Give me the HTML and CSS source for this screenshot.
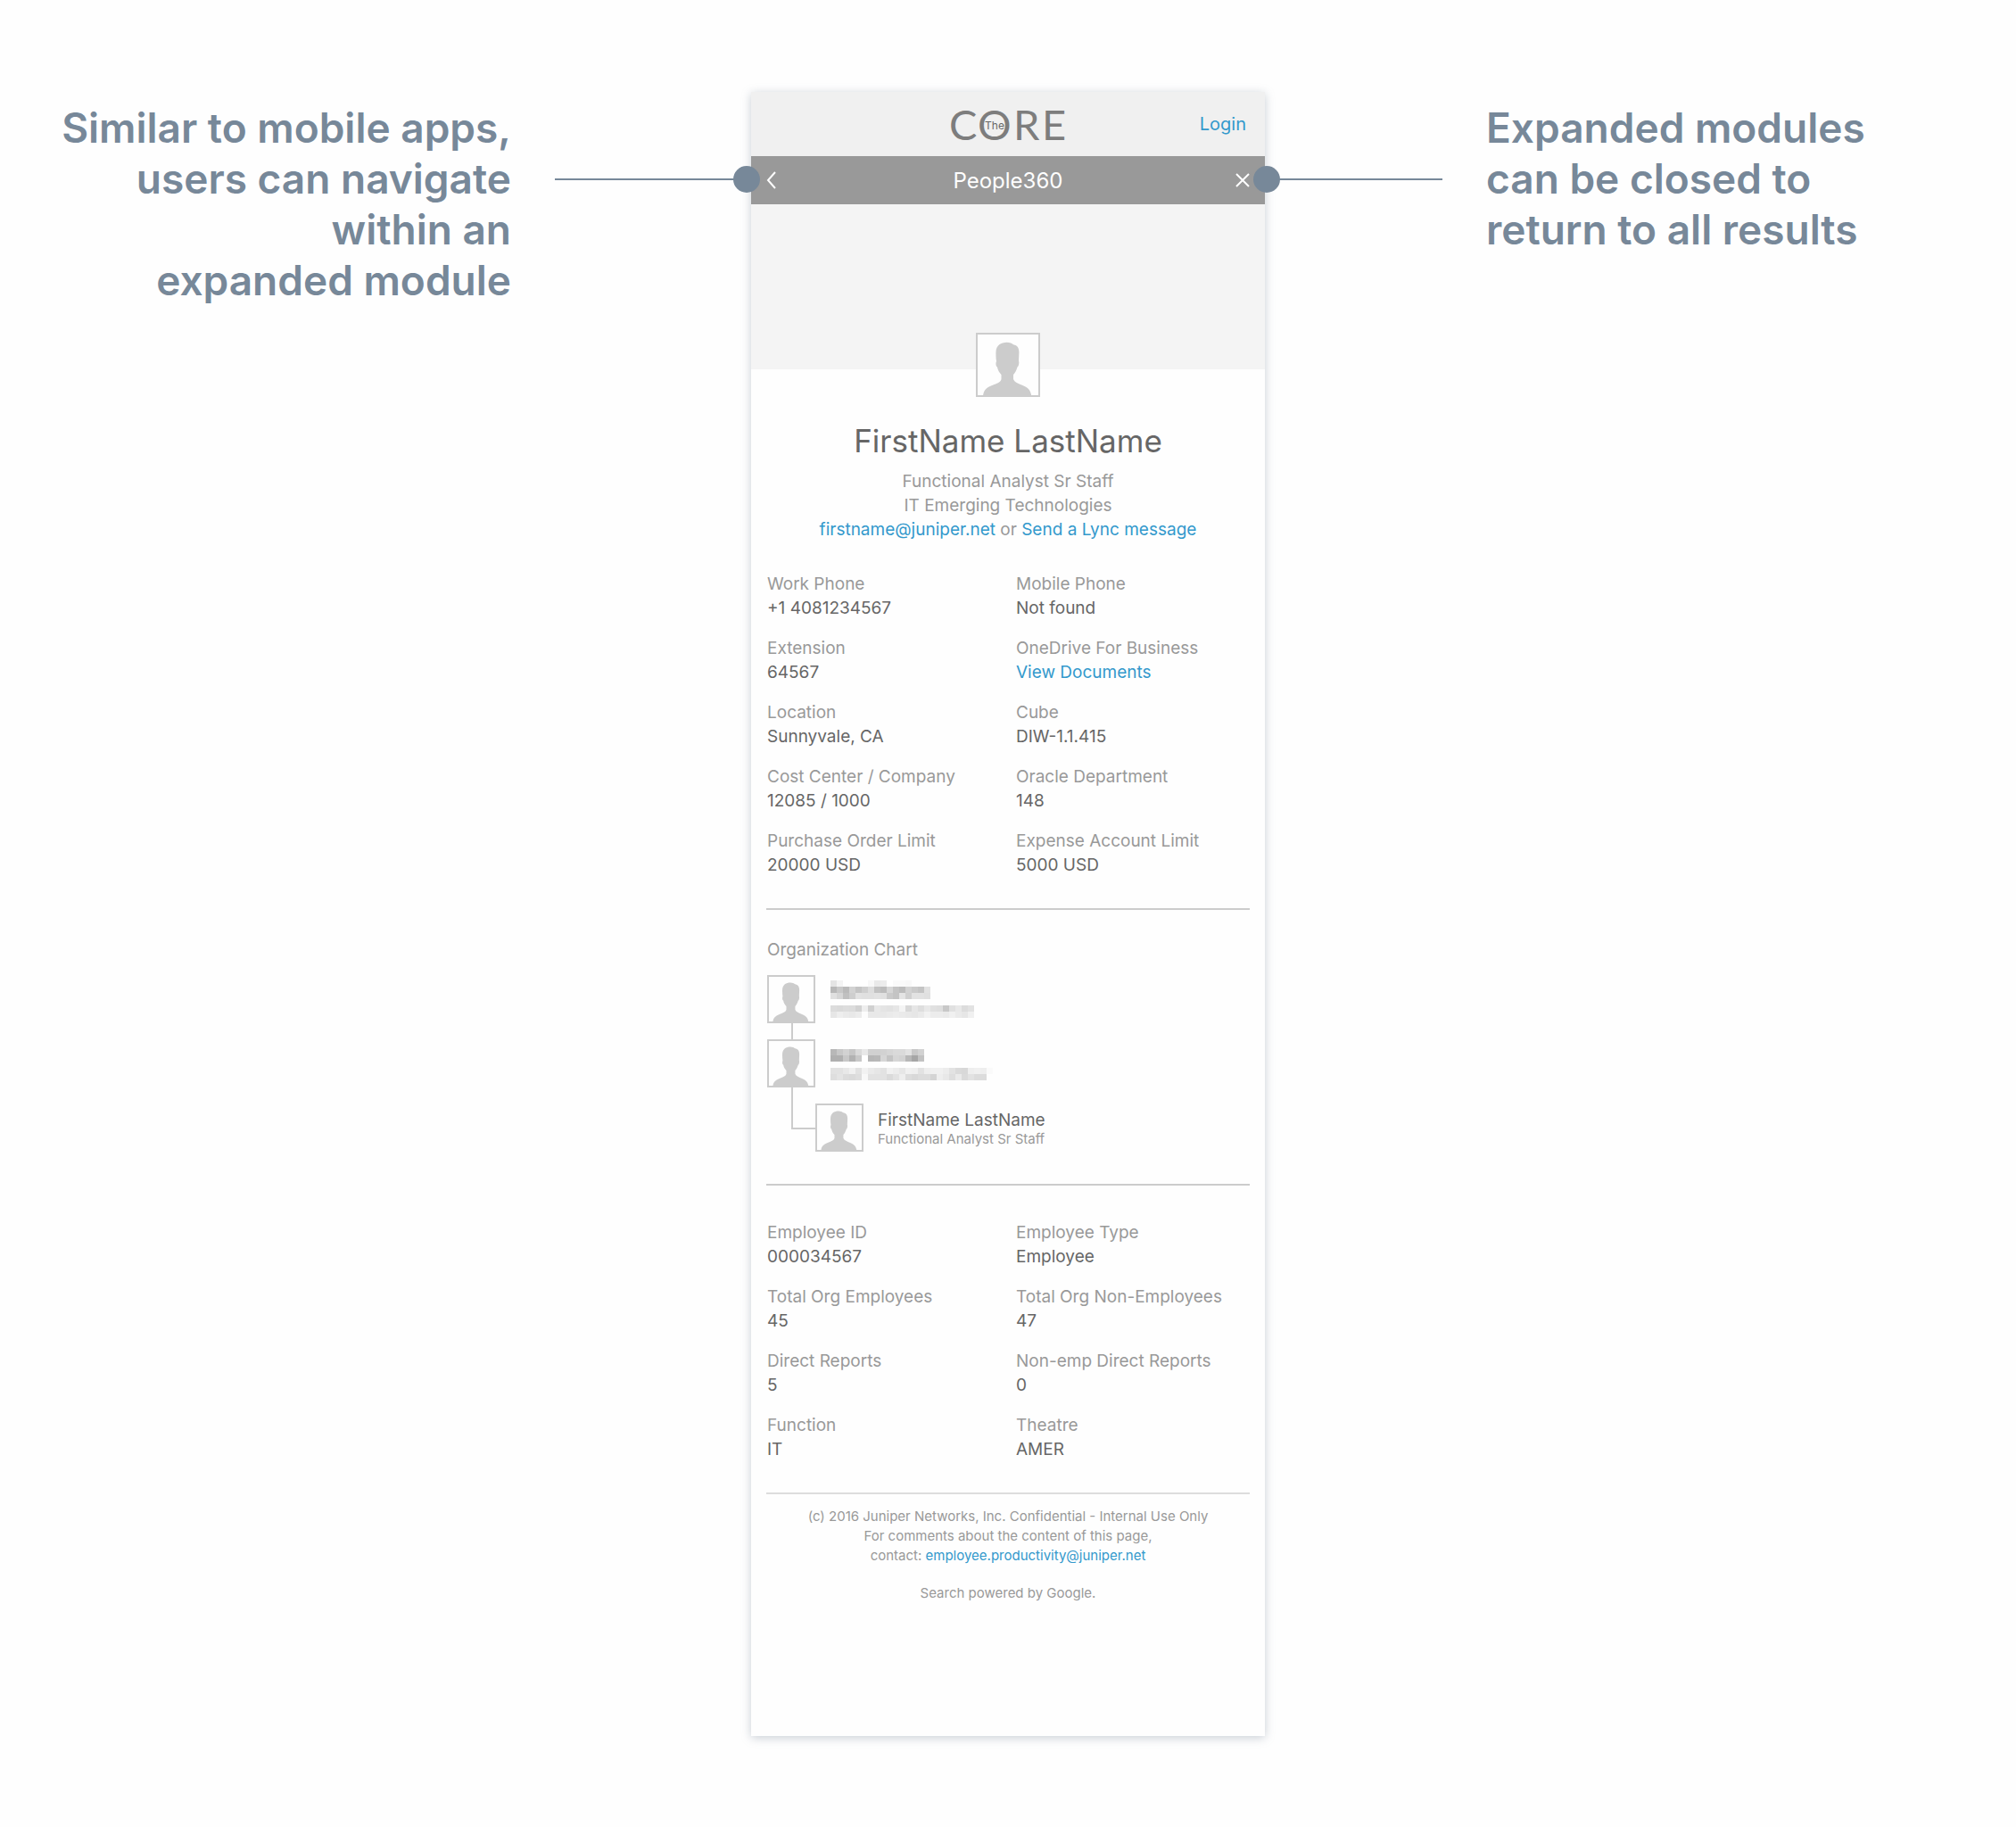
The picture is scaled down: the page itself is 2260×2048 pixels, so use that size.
FILE: index.html
```html
<!DOCTYPE html>
<html lang="en">
<head>
<meta charset="utf-8">
<meta name="viewport" content="width=device-width, initial-scale=1">
<title>People360</title>
<link rel="stylesheet" href="styles.css">
</head>
<body>
<svg class="sprite" aria-hidden="true">
  <symbol id="person" viewBox="2 2 68 68">
    <path d="M34.7 10.7C38 10.7 40.5 12 42 13.2C46.5 14 48.4 17 48.4 22L48 31.5C48.8 33.5 48 37.5 46.5 38.5C45.5 42 44 45 42 47V52C43 55 46 56.5 50 58C57 60.5 61.5 63.5 62.3 71H8C8.5 63.5 13.5 60.5 20.5 58C25 56.3 28 55 28.5 52V47C26 44.5 24.5 41.5 24 38.5C22.3 37.5 22 34 23 32C22.5 29 22.3 25 22.5 21C23 14 28 10.7 34.7 10.7Z"/>
  </symbol>
</svg>
<div class="board">
  <aside class="note note-left">
    <p class="note-text">Similar to mobile apps,<br>users can navigate<br>within an<br>expanded module</p>
    <span class="pointer"></span>
  </aside>

  <main class="card">
    <header class="masthead">
      <svg class="logo" viewBox="0 0 132 60" role="img" aria-label="The Core">
        <text class="logo-main" y="48" x="0 32 72 104">CORE</text>
        <text class="logo-the" x="51" y="36" text-anchor="middle">The</text>
      </svg>
      <a class="login" href="#login">Login</a>
    </header>
    <nav class="titlebar">
      <button class="icon-button" type="button" aria-label="Back">
        <svg viewBox="0 0 11 20" width="11" height="20"><path d="M10 1L2 10L10 19"/></svg>
      </button>
      <h1 class="title">People360</h1>
      <button class="icon-button" type="button" aria-label="Close">
        <svg viewBox="0 0 16 16" width="16" height="16"><path d="M1 1L15 15M15 1L1 15"/></svg>
      </button>
    </nav>
    <div class="cover"></div>

    <section class="profile">
      <svg class="avatar avatar-large" role="img" aria-label="Profile picture"><use href="#person"/></svg>
      <h2 class="name">FirstName LastName</h2>
      <p class="role">Functional Analyst Sr Staff<br>IT Emerging Technologies<br><a href="#mail">firstname@juniper.net</a> or <a href="#lync">Send a Lync message</a></p>
    </section>

    <dl class="facts">
      <div><dt>Work Phone</dt><dd>+1 4081234567</dd></div>
      <div><dt>Mobile Phone</dt><dd>Not found</dd></div>
      <div><dt>Extension</dt><dd>64567</dd></div>
      <div><dt>OneDrive For Business</dt><dd><a href="#documents">View Documents</a></dd></div>
      <div><dt>Location</dt><dd>Sunnyvale, CA</dd></div>
      <div><dt>Cube</dt><dd>DIW-1.1.415</dd></div>
      <div><dt>Cost Center / Company</dt><dd>12085 / 1000</dd></div>
      <div><dt>Oracle Department</dt><dd>148</dd></div>
      <div><dt>Purchase Order Limit</dt><dd>20000 USD</dd></div>
      <div><dt>Expense Account Limit</dt><dd>5000 USD</dd></div>
    </dl>

    <section class="org">
      <h3 class="org-title">Organization Chart</h3>
      <ol class="chart">
        <li class="person">
          <svg class="avatar" aria-hidden="true"><use href="#person"/></svg>
          <svg class="masked" data-mask="first" width="182" height="54" role="img" aria-label="Hidden name"></svg>
        </li>
        <li class="stem" aria-hidden="true"></li>
        <li class="person">
          <svg class="avatar" aria-hidden="true"><use href="#person"/></svg>
          <svg class="masked" data-mask="second" width="182" height="54" role="img" aria-label="Hidden name"></svg>
        </li>
        <li class="person person-child">
          <span class="elbow"></span>
          <svg class="avatar" aria-hidden="true"><use href="#person"/></svg>
          <p class="who">FirstName LastName<small>Functional Analyst Sr Staff</small></p>
        </li>
      </ol>
    </section>

    <dl class="facts facts-employment">
      <div><dt>Employee ID</dt><dd>000034567</dd></div>
      <div><dt>Employee Type</dt><dd>Employee</dd></div>
      <div><dt>Total Org Employees</dt><dd>45</dd></div>
      <div><dt>Total Org Non-Employees</dt><dd>47</dd></div>
      <div><dt>Direct Reports</dt><dd>5</dd></div>
      <div><dt>Non-emp Direct Reports</dt><dd>0</dd></div>
      <div><dt>Function</dt><dd>IT</dd></div>
      <div><dt>Theatre</dt><dd>AMER</dd></div>
    </dl>

    <footer class="footer">
      <p>(c) 2016 Juniper Networks, Inc. Confidential - Internal Use Only<br>For comments about the content of this page,<br>contact: <a href="#contact">employee.productivity@juniper.net</a></p>
      <p>Search powered by Google.</p>
    </footer>
  </main>

  <aside class="note note-right">
    <span class="pointer"></span>
    <p class="note-text">Expanded modules<br>can be closed to<br>return to all results</p>
  </aside>
</div>
<script src="masks.js"></script>
</body>
</html>
```
FILE: masks.js
```js
// Pixelated stand-ins for private names: each row is a top offset and a list of grey levels.
const CELL = 7;
const masks = {
  first: [
    [6, "e4 f4 ff ff ff ff f8 e9 ec ff fa fa f8"],
    [13, "b8 c8 ba d2 c4 cf dd c2 bc d6 c4 bc d2 ca c4 e2"],
    [20, "e0 d6 c0 ce e2 e0 e0 e2 e0 ca c4 e4 d0 e2 e2 e0"],
    [34, "dc da dd dc d2 ee d0 e8 e4 e2 e6 f4 d8 e6 de e8 e0 de c8 e0 e8 dc e2"],
    [41, "e6 ee ea e8 ec fc e8 e8 e8 ea ec ea e8 e6 ea f2 ec ec ea f0 ea e6 f0"]
  ],
  second: [
    [11, "b8 c8 d2 c6 da e8 d0 d0 d2 d6 da da e2 c8 d2"],
    [18, "b0 b0 c8 b2 c8 ff b6 b8 d6 c4 d6 d2 b8 a6 c2"],
    [32, "e2 e2 e8 f0 e2 f2 ea e6 e2 f0 ec e6 f0 ee e2 ee f0 f0 ec e2 da d8 ee f0 ee fa"],
    [39, "de e4 dc da de f8 e2 e2 e2 da e2 ee dc d8 dc dc d4 ee e8 de ea da e2 dc dc"]
  ]
};

document.querySelectorAll(".masked").forEach((svg) => {
  masks[svg.dataset.mask].forEach(([top, levels]) => {
    levels.split(" ").forEach((level, column) => {
      const cell = document.createElementNS("http://www.w3.org/2000/svg", "rect");
      cell.setAttribute("x", column * CELL);
      cell.setAttribute("y", top);
      cell.setAttribute("width", CELL);
      cell.setAttribute("height", CELL);
      cell.setAttribute("fill", "#" + level + level + level);
      svg.appendChild(cell);
    });
  });
});
```
FILE: styles.css
```css
* { box-sizing: border-box; }

body {
  margin: 0;
  background: #fefefe;
  color: #666;
  font: 400 19px/27px Inter, "Liberation Sans", sans-serif;
}

h1, h2, h3, p, dl, dd, ol { margin: 0; padding: 0; }
ol { list-style: none; }
a { color: #39c; text-decoration: none; }
.sprite { position: absolute; width: 0; height: 0; }

.board {
  display: grid;
  grid-template-columns: 1fr 576px 1fr;
  padding: 103px 0 102px;
}

/* Side notes */
.note { display: flex; align-items: flex-start; gap: 49px; color: #789; }
.note-left { justify-content: flex-end; text-align: right; }
.note-text { padding-top: 12px; font-size: 46px; font-weight: 600; line-height: 57px; white-space: nowrap; }
.pointer { position: relative; z-index: 1; width: 220px; height: 2px; margin-top: 97px; background: #789; }
.note-right .pointer { width: 199px; }
.pointer::after {
  content: "";
  position: absolute;
  top: -14px;
  right: -10px;
  width: 30px;
  height: 30px;
  border-radius: 50%;
  background: #789;
}
.note-right .pointer::after { right: auto; left: -13px; }

/* Phone card */
.card { padding-bottom: 149px; background: #fefefe; box-shadow: 0 2px 10px rgba(119, 136, 153, 0.4); }

.masthead {
  display: grid;
  grid-template-columns: 1fr auto 1fr;
  align-items: center;
  height: 72px;
  padding: 0 21px;
  background: #f0f0f0;
}
.logo { grid-column: 2; width: 132px; height: 60px; }
.logo-main { fill: #7d7d7d; font-family: Lato, sans-serif; font-size: 47px; }
.logo-the { fill: #666; font-size: 12px; }
.login { justify-self: end; font-size: 20px; }

.titlebar {
  display: flex;
  align-items: center;
  justify-content: space-between;
  height: 54px;
  padding: 0 17px;
  background: #999;
  color: #fefefe;
}
.title { font-size: 24px; font-weight: 400; }
.icon-button { display: flex; width: 16px; padding: 0; border: 0; background: none; }
.icon-button svg { fill: none; stroke: #fefefe; stroke-width: 2; }

.cover { height: 185px; background: #f4f4f4; }

.profile { margin-top: -41px; text-align: center; }
.avatar { flex: none; display: block; width: 54px; height: 54px; border: 2px solid #ccc; background: #fefefe; fill: #ccc; }
.avatar-large { position: relative; width: 72px; height: 72px; margin: 0 auto; }
.name { margin-top: 29px; font-size: 35px; font-weight: 400; line-height: 40px; }
.role { margin-top: 12px; color: #999; }

.facts { display: grid; grid-template-columns: 1fr 1fr; gap: 18px; padding: 34px 18px 35px; }
.facts-employment { padding-top: 39px; }
.facts dt { color: #999; }

.org { margin: 0 17px; padding: 31px 1px 36px; border: solid #ccc; border-width: 2px 0; }
.org-title { margin-bottom: 15px; color: #999; font-size: 19px; font-weight: 400; }
.person { display: flex; gap: 17px; }
.stem { width: 2px; height: 18px; margin-left: 27px; background: #ccc; }
.person-child { margin-top: 18px; padding-left: 27px; gap: 0; }
.elbow { width: 27px; height: 47px; margin-top: -18px; border: solid #ccc; border-width: 0 0 2px 2px; }
.who { padding: 5px 0 0 16px; }
.who small { display: block; color: #999; font-size: 15px; line-height: 16px; }

.footer {
  display: grid;
  gap: 20px;
  margin: 0 17px;
  padding-top: 14px;
  border-top: 2px solid #ddd;
  color: #999;
  font-size: 15px;
  line-height: 22px;
  text-align: center;
}
```
